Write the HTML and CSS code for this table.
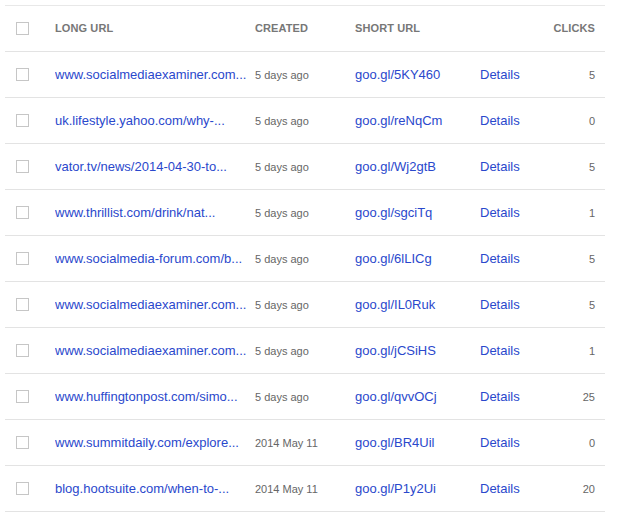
FILE: index.html
```html
<!DOCTYPE html>
<html>
<head>
<meta charset="utf-8">
<link rel="stylesheet" href="styles.css">
</head>
<body>
<div class="table">
  <div class="row head">
    <div class="c-check"><span class="box"></span></div>
    <div class="c-long">LONG URL</div>
    <div class="c-created">CREATED</div>
    <div class="c-short">SHORT URL</div>
    <div class="c-details"></div>
    <div class="c-clicks">CLICKS</div>
  </div>
  <div class="row">
    <div class="c-check"><span class="box"></span></div>
    <div class="c-long link">www.socialmediaexaminer.com...</div>
    <div class="c-created">5 days ago</div>
    <div class="c-short link">goo.gl/5KY460</div>
    <div class="c-details link">Details</div>
    <div class="c-clicks">5</div>
  </div>
  <div class="row">
    <div class="c-check"><span class="box"></span></div>
    <div class="c-long link">uk.lifestyle.yahoo.com/why-...</div>
    <div class="c-created">5 days ago</div>
    <div class="c-short link">goo.gl/reNqCm</div>
    <div class="c-details link">Details</div>
    <div class="c-clicks">0</div>
  </div>
  <div class="row">
    <div class="c-check"><span class="box"></span></div>
    <div class="c-long link">vator.tv/news/2014-04-30-to...</div>
    <div class="c-created">5 days ago</div>
    <div class="c-short link">goo.gl/Wj2gtB</div>
    <div class="c-details link">Details</div>
    <div class="c-clicks">5</div>
  </div>
  <div class="row">
    <div class="c-check"><span class="box"></span></div>
    <div class="c-long link">www.thrillist.com/drink/nat...</div>
    <div class="c-created">5 days ago</div>
    <div class="c-short link">goo.gl/sgciTq</div>
    <div class="c-details link">Details</div>
    <div class="c-clicks">1</div>
  </div>
  <div class="row">
    <div class="c-check"><span class="box"></span></div>
    <div class="c-long link">www.socialmedia-forum.com/b...</div>
    <div class="c-created">5 days ago</div>
    <div class="c-short link">goo.gl/6lLICg</div>
    <div class="c-details link">Details</div>
    <div class="c-clicks">5</div>
  </div>
  <div class="row">
    <div class="c-check"><span class="box"></span></div>
    <div class="c-long link">www.socialmediaexaminer.com...</div>
    <div class="c-created">5 days ago</div>
    <div class="c-short link">goo.gl/IL0Ruk</div>
    <div class="c-details link">Details</div>
    <div class="c-clicks">5</div>
  </div>
  <div class="row">
    <div class="c-check"><span class="box"></span></div>
    <div class="c-long link">www.socialmediaexaminer.com...</div>
    <div class="c-created">5 days ago</div>
    <div class="c-short link">goo.gl/jCSiHS</div>
    <div class="c-details link">Details</div>
    <div class="c-clicks">1</div>
  </div>
  <div class="row">
    <div class="c-check"><span class="box"></span></div>
    <div class="c-long link">www.huffingtonpost.com/simo...</div>
    <div class="c-created">5 days ago</div>
    <div class="c-short link">goo.gl/qvvOCj</div>
    <div class="c-details link">Details</div>
    <div class="c-clicks">25</div>
  </div>
  <div class="row">
    <div class="c-check"><span class="box"></span></div>
    <div class="c-long link">www.summitdaily.com/explore...</div>
    <div class="c-created">2014 May 11</div>
    <div class="c-short link">goo.gl/BR4Uil</div>
    <div class="c-details link">Details</div>
    <div class="c-clicks">0</div>
  </div>
  <div class="row">
    <div class="c-check"><span class="box"></span></div>
    <div class="c-long link">blog.hootsuite.com/when-to-...</div>
    <div class="c-created">2014 May 11</div>
    <div class="c-short link">goo.gl/P1y2Ui</div>
    <div class="c-details link">Details</div>
    <div class="c-clicks">20</div>
  </div>
</div>
</body>
</html>
```

FILE: styles.css
```css
html, body {
  margin: 0;
  padding: 0;
  background: #ffffff;
}
body {
  padding: 5px 0 0 5px;
  font-family: "Liberation Sans", Arial, sans-serif;
}
.table {
  width: 600px;
  border-top: 1px solid #e8e8e8;
}
.row {
  display: grid;
  grid-template-columns: 50px 200px 100px 125px 1fr 60px;
  align-items: center;
  height: 45px;
  border-bottom: 1px solid #e3e3e3;
  font-size: 13px;
  color: #666;
}
.row.head {
  font-size: 11px;
  font-weight: bold;
  color: #777;
  letter-spacing: 0.1px;
}
.row.head > div:not(.c-check) {
  padding-bottom: 2px;
}
.c-check {
  display: flex;
  align-items: center;
  padding-left: 11px;
}
.box {
  display: block;
  width: 11px;
  height: 11px;
  border: 1px solid #c6c6c6;
  background: #fff;
}
.link {
  color: #2a48cc;
}
.c-created {
  font-size: 11px;
}
.c-clicks {
  text-align: right;
  padding-right: 10px;
  font-size: 11px;
}
.c-long, .c-short {
  white-space: nowrap;
  overflow: hidden;
}
```
